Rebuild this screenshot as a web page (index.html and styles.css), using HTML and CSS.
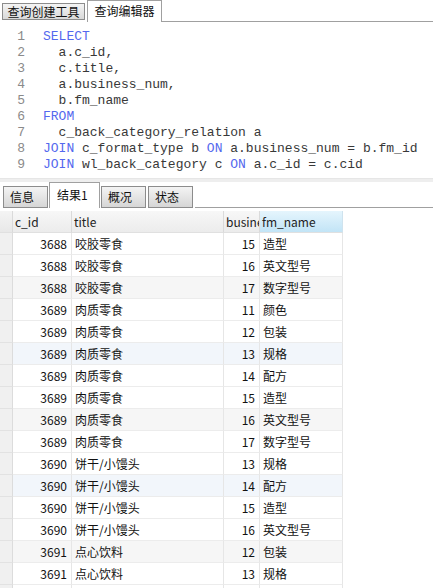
FILE: index.html
```html
<!DOCTYPE html>
<html>
<head>
<meta charset="utf-8">
<link rel="stylesheet" href="styles.css">
</head>
<body>
<div class="app">
  <div class="toptabs">
    <div class="ttab">查询创建工具</div>
    <div class="ttab active">查询编辑器</div>
    <div class="tfill"></div>
  </div>
  <div class="editor">
    <div class="ln"><span class="num">1</span><span class="code"><span class="kw">SELECT</span></span></div>
    <div class="ln"><span class="num">2</span><span class="code">  a.c_id,</span></div>
    <div class="ln"><span class="num">3</span><span class="code">  c.title,</span></div>
    <div class="ln"><span class="num">4</span><span class="code">  a.business_num,</span></div>
    <div class="ln"><span class="num">5</span><span class="code">  b.fm_name</span></div>
    <div class="ln"><span class="num">6</span><span class="code"><span class="kw">FROM</span></span></div>
    <div class="ln"><span class="num">7</span><span class="code">  c_back_category_relation a</span></div>
    <div class="ln"><span class="num">8</span><span class="code"><span class="kw">JOIN</span> c_format_type b <span class="kw">ON</span> a.business_num = b.fm_id</span></div>
    <div class="ln"><span class="num">9</span><span class="code"><span class="kw">JOIN</span> wl_back_category c <span class="kw">ON</span> a.c_id = c.cid</span></div>
  </div>
  <div class="splitter"></div>
  <div class="restabs">
    <div class="rtab">信息</div>
    <div class="rtab active">结果1</div>
    <div class="rtab">概况</div>
    <div class="rtab">状态</div>
    <div class="rfill"></div>
  </div>
  <div class="grid">
    <div class="row head">
      <div class="c ind"></div>
      <div class="c">c_id</div>
      <div class="c">title</div>
      <div class="c">busine</div>
      <div class="c sel">fm_name</div>
    </div>
    <div class="row"><div class="c ind"></div><div class="c r">3688</div><div class="c">咬胶零食</div><div class="c r">15</div><div class="c">造型</div></div>
    <div class="row"><div class="c ind"></div><div class="c r">3688</div><div class="c">咬胶零食</div><div class="c r">16</div><div class="c">英文型号</div></div>
    <div class="row g"><div class="c ind"></div><div class="c r">3688</div><div class="c">咬胶零食</div><div class="c r">17</div><div class="c">数字型号</div></div>
    <div class="row"><div class="c ind"></div><div class="c r">3689</div><div class="c">肉质零食</div><div class="c r">11</div><div class="c">颜色</div></div>
    <div class="row"><div class="c ind"></div><div class="c r">3689</div><div class="c">肉质零食</div><div class="c r">12</div><div class="c">包装</div></div>
    <div class="row b"><div class="c ind"></div><div class="c r">3689</div><div class="c">肉质零食</div><div class="c r">13</div><div class="c">规格</div></div>
    <div class="row"><div class="c ind"></div><div class="c r">3689</div><div class="c">肉质零食</div><div class="c r">14</div><div class="c">配方</div></div>
    <div class="row"><div class="c ind"></div><div class="c r">3689</div><div class="c">肉质零食</div><div class="c r">15</div><div class="c">造型</div></div>
    <div class="row g"><div class="c ind"></div><div class="c r">3689</div><div class="c">肉质零食</div><div class="c r">16</div><div class="c">英文型号</div></div>
    <div class="row"><div class="c ind"></div><div class="c r">3689</div><div class="c">肉质零食</div><div class="c r">17</div><div class="c">数字型号</div></div>
    <div class="row"><div class="c ind"></div><div class="c r">3690</div><div class="c">饼干/小馒头</div><div class="c r">13</div><div class="c">规格</div></div>
    <div class="row b"><div class="c ind"></div><div class="c r">3690</div><div class="c">饼干/小馒头</div><div class="c r">14</div><div class="c">配方</div></div>
    <div class="row"><div class="c ind"></div><div class="c r">3690</div><div class="c">饼干/小馒头</div><div class="c r">15</div><div class="c">造型</div></div>
    <div class="row"><div class="c ind"></div><div class="c r">3690</div><div class="c">饼干/小馒头</div><div class="c r">16</div><div class="c">英文型号</div></div>
    <div class="row g"><div class="c ind"></div><div class="c r">3691</div><div class="c">点心饮料</div><div class="c r">12</div><div class="c">包装</div></div>
    <div class="row"><div class="c ind"></div><div class="c r">3691</div><div class="c">点心饮料</div><div class="c r">13</div><div class="c">规格</div></div>
    <div class="row"><div class="c ind"></div><div class="c r"></div><div class="c"></div><div class="c r"></div><div class="c"></div></div>
  </div>
</div>
</body>
</html>
```
FILE: styles.css
```css
* { box-sizing: border-box; }
html, body { margin: 0; padding: 0; background: #fff; }
body { width: 433px; height: 588px; overflow: hidden; font-family: "Noto Sans CJK SC", "Noto Sans", sans-serif; font-size: 12px; color: #111; }
.app { display: flex; flex-direction: column; height: 588px; overflow: hidden; }

.toptabs { display: flex; align-items: flex-end; height: 22px; flex: none; padding-left: 2px; }
.ttab { flex: none; white-space: nowrap; height: 22px; line-height: 20px; padding: 0; border: 1px solid #a0a0a0; border-bottom: none; background: #fff; width: 75px; text-align: center; }
.toptabs .ttab:first-child { width: 83px; height: 17px; line-height: 15px; margin-right: 2px; margin-bottom: 2px; border: 1px solid #8c8c8c; background: linear-gradient(#f4f4f4, #d9d9d9); }
.tfill { flex: 1; align-self: stretch; border-bottom: 1px solid #a0a0a0; }

.editor { height: 156px; flex: none; padding-top: 7px; font-family: "Liberation Mono", monospace; font-size: 13px; color: #383838; }
.ln { display: flex; height: 16px; line-height: 16px; white-space: pre; }
.num { width: 25px; text-align: right; color: #8a8a8a; flex: none; }
.code { margin-left: 18px; }
.kw { color: #5468ee; }

.splitter { height: 4px; flex: none; background: #eeeeee; border-top: 1px solid #e6e6e6; }
.restabs { display: flex; align-items: flex-end; height: 26px; flex: none; padding-left: 3px; }
.rtab { flex: none; white-space: nowrap; height: 22px; line-height: 20px; padding-left: 6px; border: 1px solid #8c8c8c; background: linear-gradient(#f4f4f4, #d6d6d6); width: 45px; margin-right: 2px; }
.rtab.active { height: 26px; line-height: 24px; background: #fff; border-color: #a0a0a0; border-bottom: none; width: 51px; margin-left: -1px; margin-right: 1px; padding-left: 7px; }
.rfill { flex: 1; align-self: stretch; border-bottom: 1px solid #a0a0a0; }

.grid { margin-top: 3px; flex: none; }
.row { display: grid; grid-template-columns: 13px 59px 152px 36px 83px; height: 22px; }
.c { height: 22px; line-height: 21px; border-right: 1px solid #e6e6e6; border-bottom: 1px solid #ececec; padding: 0 3px; white-space: nowrap; overflow: hidden; }
.c.r { text-align: right; padding-right: 4px; }
.c.ind { background: #f0f0f0; border-right: 1px solid #dcdcdc; border-bottom: 1px solid #e2e2e2; }
.head .c { background: linear-gradient(#f7f7f7, #ececec); border-right: 1px solid #dadada; border-bottom: 1px solid #e0e0e0; color: #222; padding-left: 2px; padding-right: 0; }
.head .c.ind { background: linear-gradient(#f4f4f4, #e8e8e8); }
.head .c.sel { background: linear-gradient(#e5f5fd, #c2e4f6); border-right: 1px solid #cfe3ee; }
.row.g .c:not(.ind) { background: #f6f6f6; }
.row.b .c:not(.ind) { background: #f2f6fb; }
```
